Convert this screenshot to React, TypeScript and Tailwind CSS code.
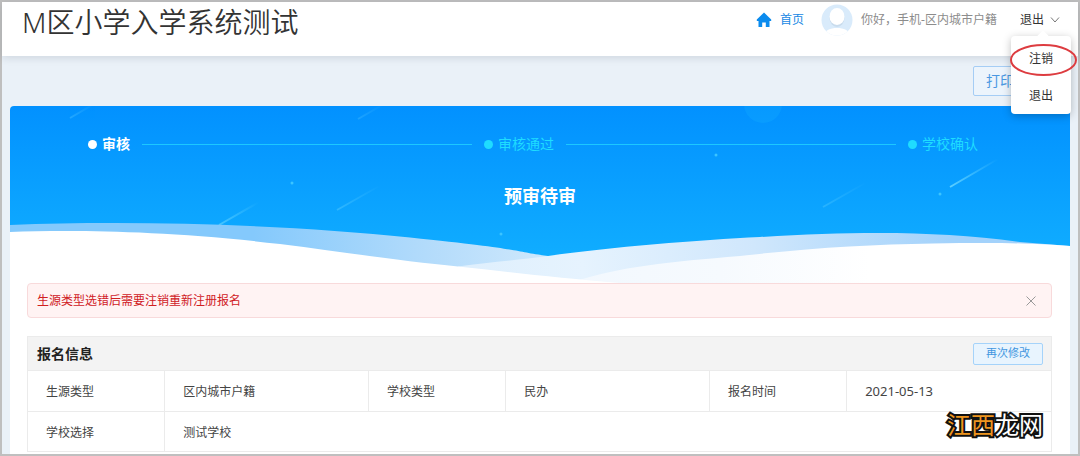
import { useId } from "react";

interface Step {
  label: string;
  active: boolean;
}

const STEPS: Step[] = [
  { label: "审核", active: true },
  { label: "审核通过", active: false },
  { label: "学校确认", active: false },
];

const STREAKS = [
  { x1: 60, y1: 12, x2: 84, y2: -2, opacity: 0.25 },
  { x1: 348, y1: 13, x2: 374, y2: -2, opacity: 0.2 },
  { x1: 209, y1: 119, x2: 249, y2: 96, opacity: 0.5 },
  { x1: 327, y1: 104, x2: 371, y2: 79, opacity: 0.3 },
  { x1: 813, y1: 101, x2: 857, y2: 76, opacity: 0.25 },
  { x1: 940, y1: 81, x2: 988, y2: 53, opacity: 0.7 },
];

const SPARKS = [
  { x: 282, y: 77 },
  { x: 706, y: 49 },
  { x: 930, y: 88 },
  { x: 491, y: 128 },
];

function HomeIcon() {
  return (
    <svg viewBox="0 0 16 16" className="h-4 w-4" aria-hidden="true">
      <path d="M8 0.500 0.800 7.500v1.500H2.500v6h3.700v-4.500h3.600v4.500h3.700V9h1.700V7.500z" fill="#0b8bee" />
    </svg>
  );
}

function Avatar() {
  const clipId = useId();
  return (
    <svg viewBox="0 0 32 32" className="h-8 w-8" aria-hidden="true">
      <clipPath id={clipId}>
        <circle cx="16" cy="16" r="15.500" />
      </clipPath>
      <g clipPath={`url(#${clipId})`}>
        <rect width="32" height="32" fill="#d9ebfb" />
        <ellipse cx="16" cy="14" rx="7.500" ry="9" fill="#c9dced" />
        <path d="M3 32c1-6 6-8 13-8s12 2 13 8z" fill="#fff" />
        <ellipse cx="16" cy="12.500" rx="7.500" ry="8.500" fill="#fff" />
      </g>
    </svg>
  );
}

function UserMenu() {
  return (
    <div className="relative">
      <button className="flex items-center gap-1.5 text-[#333]">
        退出
        <svg viewBox="0 0 10 10" className="h-2.5 w-2.5" fill="none" stroke="#777" aria-hidden="true">
          <path d="M1 2.500l4 4.500 4-4.500" />
        </svg>
      </button>
      <div className="absolute top-6 -right-[11px] z-10 w-[60px] rounded bg-white shadow-[0_2px_8px_rgba(0,0,0,0.25)]">
        <span className="absolute -top-1 right-6 h-2 w-2 rotate-45 bg-white" />
        <div className="relative flex flex-col pt-1 text-[#333]">
          <button className="h-[38px]">注销</button>
          <button className="h-9">退出</button>
        </div>
        <svg
          viewBox="0 0 68 34"
          className="pointer-events-none absolute top-[7px] -left-px h-[34px] w-[68px]"
          fill="none"
          aria-hidden="true"
        >
          <ellipse cx="33.500" cy="17" rx="32.500" ry="15" stroke="#dd3c40" strokeWidth="2" />
        </svg>
      </div>
    </div>
  );
}

function Header() {
  return (
    <header className="relative z-10 flex h-[54px] items-start justify-between bg-white pr-[18px] pl-5 shadow-[0_2px_8px_rgba(0,21,41,0.12)]">
      <h1 className="text-[28px] leading-10 font-[350] text-[#333]">M区小学入学系统测试</h1>
      <nav className="flex h-9 items-center text-xs">
        <a href="#" className="flex items-center gap-2 text-[#1888e4]">
          <HomeIcon />
          首页
        </a>
        <div className="mr-[23px] ml-[17px] flex items-center gap-2 text-[#8c8c8c]">
          <Avatar />
          你好，手机-区内城市户籍
        </div>
        <UserMenu />
      </nav>
    </header>
  );
}

function BannerBackdrop() {
  const id = useId();
  return (
    <svg
      viewBox="0 0 1060 177"
      preserveAspectRatio="none"
      className="h-[177px] w-full rounded-t [grid-area:1/1]"
      aria-hidden="true"
    >
      <defs>
        <linearGradient id={`${id}sky`} x1="0" y1="0" x2="0" y2="1">
          <stop offset="0" stopColor="#0291ff" />
          <stop offset="0.850" stopColor="#10adff" />
        </linearGradient>
        <linearGradient id={`${id}left`} gradientUnits="userSpaceOnUse" x1="0" y1="0" x2="540" y2="0">
          <stop offset="0.450" stopColor="#84c9fc" />
          <stop offset="0.750" stopColor="#b0dafb" />
          <stop offset="1" stopColor="#cfe8fc" />
        </linearGradient>
        <linearGradient id={`${id}right`} gradientUnits="userSpaceOnUse" x1="450" y1="175" x2="940" y2="120">
          <stop offset="0" stopColor="#deeffd" />
          <stop offset="0.250" stopColor="#e6f3fe" />
          <stop offset="0.600" stopColor="#d0e7fc" />
          <stop offset="1" stopColor="#a3d2fb" />
        </linearGradient>
        <linearGradient id={`${id}front`} gradientUnits="userSpaceOnUse" x1="560" y1="0" x2="860" y2="0">
          <stop offset="0" stopColor="#f2f8fe" />
          <stop offset="0.500" stopColor="#f6fafe" />
          <stop offset="1" stopColor="#fff" />
        </linearGradient>
        <linearGradient id={`${id}streak`} x1="0" y1="1" x2="1" y2="0">
          <stop offset="0" stopColor="#7fe3ff" />
          <stop offset="1" stopColor="#7fe3ff" stopOpacity="0" />
        </linearGradient>
      </defs>
      <rect width="1060" height="177" fill={`url(#${id}sky)`} />
      <circle cx="753" cy="-2" r="19" fill="#19b4ff" opacity="0.250" />
      {STREAKS.map((s) => (
        <line
          key={s.x1}
          x1={s.x1}
          y1={s.y1}
          x2={s.x2}
          y2={s.y2}
          stroke={`url(#${id}streak)`}
          strokeWidth="2"
          opacity={s.opacity}
        />
      ))}
      {SPARKS.map((s) => (
        <circle key={s.x} cx={s.x} cy={s.y} r="1.500" fill="#3cc4ff" />
      ))}
      <path
        d="M0 119C130 114 280 119 400 131.500S500 145 538 150L600 177H0z"
        fill={`url(#${id}left)`}
      />
      <path
        d="M448 160.500C480 156 510 154 538 150C600 141 690 134 750 131C850 125 930 125 1010 136L1060 140V177H448z"
        fill={`url(#${id}right)`}
      />
      <path
        d="M560 177C610 160 660 156 730 150C800 142 860 138.500 923 137.500S1020 137 1060 140V177z"
        fill={`url(#${id}front)`}
      />
      <path d="M0 126C60 124 150 124 270 138C340 147 400 156 448 160.500C500 166 550 172 610 177H0z" fill="#fff" />
    </svg>
  );
}

function StepItem({ label, active }: Step) {
  return (
    <li
      className={
        active
          ? "flex items-center gap-[5px] font-bold text-white"
          : "flex items-center gap-[5px] text-[#1fdcff]"
      }
    >
      <span className="h-[9px] w-[9px] rounded-full bg-current" />
      {label}
    </li>
  );
}

function StepGroup({ step, last }: { step: Step; last: boolean }) {
  return (
    <>
      <StepItem {...step} />
      {!last && <li aria-hidden="true" className="h-px flex-1 bg-[#1cc8ff]" />}
    </>
  );
}

function ProgressBanner() {
  return (
    <section className="grid">
      <BannerBackdrop />
      <div className="pt-7 text-sm [grid-area:1/1]">
        <ol className="flex items-center gap-3 pr-[92px] pl-[78px] leading-5">
          {STEPS.map((step, i) => (
            <StepGroup key={step.label} step={step} last={i === STEPS.length - 1} />
          ))}
        </ol>
        <h2 className="mt-7 text-center text-lg font-bold text-white">预审待审</h2>
      </div>
    </section>
  );
}

function WarningAlert() {
  return (
    <div
      role="alert"
      className="flex h-[35px] items-center justify-between rounded-sm border border-[#f8dadb] bg-[#fff3f3] pr-[15px] pl-[9px] text-xs text-[#d0201f]"
    >
      生源类型选错后需要注销重新注册报名
      <button aria-label="关闭">
        <svg viewBox="0 0 10 10" className="h-2.5 w-2.5" stroke="#999" aria-hidden="true">
          <path d="M0.500 0.500l9 9M9.500 0.500l-9 9" />
        </svg>
      </button>
    </div>
  );
}

function InfoTable() {
  const label = "border border-[#ebebeb] px-[18px] pt-0.5 text-left font-normal";
  const value = "border border-[#ebebeb] px-[18px] pt-0.5";
  return (
    <section className="mt-[18px]">
      <div className="flex h-[34px] items-center justify-between border border-b-0 border-[#ebebeb] bg-[#f3f3f3] pr-2 pl-[9px]">
        <h3 className="text-sm font-bold text-[#222]">报名信息</h3>
        <button className="h-[22px] rounded-xs border border-[#a5d3fa] bg-[#e8f4fe] px-3 text-[11px] text-[#4296e0]">
          再次修改
        </button>
      </div>
      <table className="w-full table-fixed border-collapse text-xs text-[#444]">
        <colgroup>
          <col className="w-[13.4%]" />
          <col className="w-[19.9%]" />
          <col className="w-[13.4%]" />
          <col className="w-[19.9%]" />
          <col className="w-[13.4%]" />
          <col className="w-[20%]" />
        </colgroup>
        <tbody>
          <tr className="h-[41px]">
            <th scope="row" className={label}>生源类型</th>
            <td className={value}>区内城市户籍</td>
            <th scope="row" className={label}>学校类型</th>
            <td className={value}>民办</td>
            <th scope="row" className={label}>报名时间</th>
            <td className={value}>
              <time className="text-[13px]">2021-05-13</time>
            </td>
          </tr>
          <tr className="h-[40px]">
            <th scope="row" className={label}>学校选择</th>
            <td className={value} colSpan={5}>测试学校</td>
          </tr>
        </tbody>
      </table>
    </section>
  );
}

export default function App() {
  return (
    <div className="relative min-h-screen border-2 border-[#bfbfbf] bg-[#eaf1f8] font-['Noto_Sans','Noto_Sans_CJK_SC',sans-serif]">
      <Header />
      <div className="flex h-[50px] items-start justify-end px-2 pt-2.5">
        <button className="h-[30px] w-[97px] rounded-xs border border-[#a5cdf5] bg-[#ecf4fc] px-3 text-left text-sm text-[#4a98e2]">
          打印
        </button>
      </div>
      <main className="mx-2 rounded-t bg-white">
        <ProgressBanner />
        <div className="pr-[18px] pb-0.5 pl-[17px]">
          <WarningAlert />
          <InfoTable />
        </div>
      </main>
      <div className="absolute right-[35px] bottom-[15px] text-2xl leading-7 text-white [-webkit-text-stroke:4px_#111] [paint-order:stroke]">
        <span className="text-[#ee951f]">江西</span>龙网
      </div>
    </div>
  );
}
